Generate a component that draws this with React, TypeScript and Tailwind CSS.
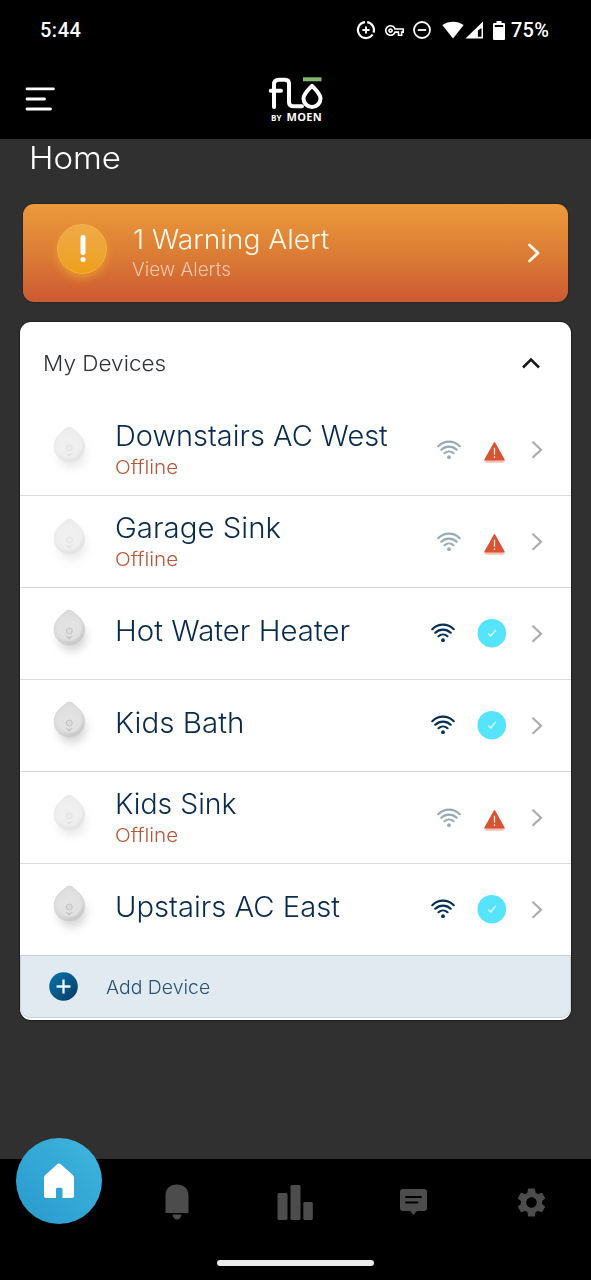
import React from "react";
import { MdOutlineVpnKey, MdSettings } from "react-icons/md";

type Device = { name: string; online: boolean; stretch: string };

const devices: Device[] = [
  { name: "Downstairs AC West", online: false, stretch: "scale-x-[1.034]" },
  { name: "Garage Sink", online: false, stretch: "scale-x-[1.05]" },
  { name: "Hot Water Heater", online: true, stretch: "scale-x-[1.05]" },
  { name: "Kids Bath", online: true, stretch: "scale-x-[1.055]" },
  { name: "Kids Sink", online: false, stretch: "scale-x-[1.015]" },
  { name: "Upstairs AC East", online: true, stretch: "scale-x-[1.042]" },
];

function StatusBar() {
  return (
    <div className="flex h-[60px] items-center pr-[41px] pl-[40px] text-white">
      <span className="font-[Roboto] text-[20px] leading-6 font-medium tracking-[0.5px]">5:44</span>
      <div className="ml-auto flex items-center">
        <svg className="h-5 w-5" viewBox="0 0 20 20" fill="none" stroke="currentColor">
          <path d="M9 2.1A8 8 0 1 0 16.6 14.5M11.2 2.1A8 8 0 0 1 17.5 12.6" strokeWidth="2.2" />
          <path d="M10 6.4v7.2M6.4 10h7.2" strokeWidth="1.9" />
        </svg>
        <MdOutlineVpnKey className="ml-[9px] h-[19px] w-[19px]" />
        <svg className="ml-2 h-5 w-5" viewBox="0 0 20 20" fill="none" stroke="currentColor" strokeWidth="1.8">
          <circle cx="10" cy="10" r="8" />
          <path d="M5.8 10h8.4" />
        </svg>
        <svg className="ml-[10px] h-[18px] w-[42px]" viewBox="0 0 42 18" fill="currentColor">
          <path d="M.3 4C6.500-.5 15.400-.5 21.700 4L11 17.500Z" />
          <path fillRule="evenodd" d="M41 .5v17H23.500ZM39.500 7v8.800h-3.600V9.500Z" />
        </svg>
        <svg className="ml-[9px] h-[19px] w-3" viewBox="0 0 12 19">
          <path fill="currentColor" fillRule="evenodd" d="M3.5 0h5v2H11q1 0 1 1v15q0 1-1 1H1q-1 0-1-1V3q0-1 1-1h2.500ZM1.800 4v2h8.400V4Z" />
        </svg>
        <span className="ml-[6px] w-[39px] font-[Roboto] text-[20px] leading-6 font-medium tracking-[0.2px]">75%</span>
      </div>
    </div>
  );
}

function Header() {
  return (
    <header className="grid h-[79px] grid-cols-[1fr_56px_1fr] items-center pl-[25px]">
      <svg className="-mt-[2px] h-6 w-[30px]" viewBox="0 0 30 24" stroke="white" strokeWidth="2.800" strokeLinecap="round">
        <path d="M2 1.800H28.500M2 12H19.500M2 22H25.500" />
      </svg>
      <div className="mt-[2px] -ml-[12px] flex w-[56px] flex-col items-center">
        <svg className="h-[32px] w-[56px]" viewBox="0 0 56 32" fill="none">
          <path d="M6 30V7.500Q6 2.700 11 2.700H17Q21 2.700 21 6.700V25Q21 29.300 26 29.300H34M2.700 13.800H13" stroke="white" strokeWidth="4" strokeLinecap="round" />
          <path d="M44 8.800C39.500 13.500 35.500 17 35.500 21.500A8.500 8.500 0 0 0 52.500 21.500C52.500 17 48.500 13.500 44 8.800Z" stroke="white" strokeWidth="4" strokeLinejoin="round" />
          <path d="M35 2.300H53.500" stroke="#83b86e" strokeWidth="4" />
        </svg>
        <div className="mt-[2px] ml-px flex w-[51px] items-baseline justify-between font-['Open_Sans'] leading-[12px] font-bold text-white">
          <span className="text-[8px]">BY</span>
          <span className="text-[11px] font-bold tracking-[0.3px]">MOEN</span>
        </div>
      </div>
    </header>
  );
}

function Warning() {
  return (
    <section className="ml-[23px] flex h-[98px] w-[545px] rounded-[11px] bg-linear-to-b from-[#eb9a3b] via-[#dc7d35] to-[#cc5932] shadow-[0_0_2px_#201a16]">
      <div className="mt-[20px] ml-[34px] flex h-[50px] w-[50px] items-center justify-center rounded-full border border-[#f4b348] bg-linear-to-b from-[#efaa48] to-[#eea016] shadow-[0_4px_9px_#efa02ccc]">
        <svg className="-mt-px ml-px h-7 w-2" viewBox="0 0 8 28" fill="white">
          <rect x="1.500" y="0" width="5" height="20" rx="2.500" />
          <circle cx="4" cy="24.500" r="2.500" />
        </svg>
      </div>
      <div className="ml-[25px] pt-[20px]">
        <div className="origin-left scale-x-[1.043] pl-px text-[27px] leading-[32px] text-[#fff8e8]">1 Warning Alert</div>
        <div className="mt-[2px] origin-left scale-x-[1.022] text-[18.500px] leading-[22px] text-[#f8c8ac]">View Alerts</div>
      </div>
      <svg className="mt-[39px] mr-[28px] ml-auto h-5 w-3" viewBox="0 0 12 20" fill="none" stroke="#fff8e8" strokeWidth="2.800" strokeLinecap="round" strokeLinejoin="round">
        <path d="m1.500 2 8.500 8-8.500 8" />
      </svg>
    </section>
  );
}

function Detector({ online }: { online: boolean }) {
  return (
    <svg className={online ? "h-[60px] w-[60px]" : "h-[60px] w-[60px] opacity-50"} viewBox="0 0 60 60">
      <defs>
        <linearGradient id="shell" x1="0" y1="0" x2="0.6" y2="1">
          <stop stopColor="#dcdcdc" />
          <stop offset="0.5" stopColor="#dedede" />
          <stop offset="1" stopColor="#c9c9c9" />
        </linearGradient>
        <radialGradient id="face">
          <stop stopColor="#e3e3e3" />
          <stop offset="0.8" stopColor="#e1e1e1" />
          <stop offset="1" stopColor="#e1e1e1" stopOpacity="0" />
        </radialGradient>
        <filter id="soft" x="-40%" y="-40%" width="180%" height="180%"><feGaussianBlur stdDeviation="4" /></filter>
      </defs>
      <circle cx="33" cy="38" r="14" fill="#bbb" opacity="0.6" filter="url(#soft)" />
      <path d="M24 15Q28 11 30.300 11T36.600 15C41.500 19 45.600 23.500 45.600 31A15.200 15.200 0 0 1 15.200 31C15.200 23.500 19 19 24 15Z" fill="url(#shell)" stroke="#cfcfcf" strokeWidth="0.800" />
      <ellipse cx="30.300" cy="29" rx="14" ry="14.500" fill="url(#face)" />
      <circle cx="30.300" cy="32" r="3" fill="#dcdcdc" stroke="#c0c0c0" strokeWidth="0.900" />
      <path d="M27.300 37.500q3 2.500 6 0M29.300 39.700h2" fill="none" stroke="#bbb" strokeWidth="1" />
    </svg>
  );
}

function Wifi({ online }: { online: boolean }) {
  return (
    <svg className={online ? "-mt-px h-5 w-6 text-[#062f55]" : "h-5 w-6 text-[#95abba]"} viewBox="0 0 24 20" fill="none" stroke="currentColor" strokeWidth="2.200" strokeLinecap="round">
      <path d="M1.300 6.200C7.400.2 16.600.2 22.700 6.200M4.300 9.700C8.800 5.500 15.200 5.500 19.700 9.700M7.500 13.200C10.100 10.900 13.900 10.900 16.500 13.200" />
      <circle cx="12" cy="17.200" r="1.900" fill="currentColor" stroke="none" />
    </svg>
  );
}

function DeviceRow({ device }: { device: Device }) {
  const { name, online, stretch } = device;
  return (
    <li className="flex h-[92px] items-center border-b border-[#d8dadc] pl-[19px]">
      <div className={online ? "mb-[10px]" : "mb-[8px]"}><Detector online={online} /></div>
      <div className="ml-[16px] w-[300px] whitespace-nowrap">
        <div className={`${online ? "mb-[6px]" : "-mt-px"} origin-left text-[28px] leading-[34px] text-[#092b4e] ${stretch}`}>{name}</div>
        {!online && <div className="mt-[3px] origin-left scale-x-[1.09] text-[19px] leading-[24px] text-[#bd5638]">Offline</div>}
      </div>
      <div className={online ? "ml-[16px] w-6" : "ml-[22px] w-6"}><Wifi online={online} /></div>
      {online ? (
        <svg className="-mt-px ml-[22px] h-[30px] w-[30px]" viewBox="0 0 30 30">
          <circle cx="14.800" cy="15.200" r="14.300" fill="#56e4fa" />
          <path d="m11.300 15.500 2.500 2.500 5-6" fill="none" stroke="#d7fbff" strokeWidth="1.300" />
        </svg>
      ) : (
        <svg className="mt-[5px] ml-[21px] h-[26px] w-[25px]" viewBox="0 0 25 26">
          <defs><filter id="glow" x="-20%" y="-150%" width="140%" height="400%"><feGaussianBlur stdDeviation="1.200" /></filter></defs>
          <path d="M4 22h17v.5H4Z" fill="#f6a28c" stroke="#f6a28c" strokeWidth="2" filter="url(#glow)" />
          <path d="M12.500 3.800 22 20.800H3Z" fill="#d65433" stroke="#d65433" strokeWidth="1.500" strokeLinejoin="round" />
          <path d="M12.500 8.800v7M12.500 17.300v1.800" stroke="#ffe2d5" strokeWidth="1.300" />
        </svg>
      )}
      <svg className="ml-[24px] h-5 w-3" viewBox="0 0 12 20" fill="none" stroke="#acacac" strokeWidth="2.200">
        <path d="m1.500 1.700 8.500 8-8.500 8" />
      </svg>
    </li>
  );
}

function DevicesCard() {
  return (
    <section className="mt-[20px] ml-5 h-[698px] w-[551px] overflow-hidden rounded-[11px] bg-white shadow-[0_0_2px_black]">
      <div className="flex h-[82px] items-center pr-[31px] pl-[23px]">
        <h2 className="origin-left scale-x-[1.025] text-[22px] leading-7 text-[#303438]">My Devices</h2>
        <svg className="-mt-px ml-auto h-3 w-[18px]" viewBox="0 0 18 12" fill="none" stroke="#171717" strokeWidth="2.500">
          <path d="m1 10.500 8-8 8 8" />
        </svg>
      </div>
      <ul>{devices.map((device) => <DeviceRow key={device.name} device={device} />)}</ul>
      <div className="-mt-px flex h-[63px] items-center rounded-b-[10px] border border-[#c6d1d6] bg-[#e1eaf1] pl-[28px]">
        <svg className="h-[29px] w-[29px]" viewBox="0 0 29 29">
          <defs><linearGradient id="add" x2="1" y2="1"><stop stopColor="#0873ae" /><stop offset="1" stopColor="#063b62" /></linearGradient></defs>
          <circle cx="14.500" cy="14.500" r="14.300" fill="url(#add)" />
          <path d="M14.500 7.500v14M7.500 14.500h14" stroke="#e8f7ff" strokeWidth="2.300" />
        </svg>
        <span className="ml-[28px] origin-left scale-x-[1.05] text-[18.500px] leading-6 text-[#2b5270]">Add Device</span>
      </div>
    </section>
  );
}

function BottomNav() {
  return (
    <nav className="flex h-[121px] flex-col bg-black text-[#4c4c4c]">
      <div className="grid h-[86px] grid-cols-5 items-center justify-items-center">
        <div className="-mt-[42px] flex h-[86px] w-[86px] items-center justify-center rounded-full bg-linear-to-bl from-[#3eb5dd] to-[#289ace]">
          <svg className="-mt-px h-[35px] w-[30px]" viewBox="0 0 30 36" preserveAspectRatio="none" fill="white">
            <path d="M13.500 1Q15 0 16.500 1L28.500 12Q30 13.500 30 15V34Q30 36 28 36H18.500V27Q18.500 25.500 17 25.500H13.500Q12 25.500 12 27V36H2Q0 36 0 34V15Q0 13.500 1.500 12Z" />
          </svg>
        </div>
        <svg className="h-9 w-6" viewBox="0 0 24 36" fill="currentColor">
          <path d="M.5 29V12C.5 4.500 5 .5 12 .5S23.500 4.500 23.500 12v17ZM7.500 30.500h9q-1 5-4.500 5t-4.500-5Z" />
        </svg>
        <svg className="h-[35px] w-[36px]" viewBox="0 0 36 35" fill="currentColor">
          <rect x=".5" y="8" width="10" height="27" rx="1.500" />
          <rect x="13.500" width="10" height="35" rx="1.500" />
          <rect x="26.300" y="17" width="9.500" height="18" rx="1.500" />
        </svg>
        <svg className="h-[26px] w-[27px]" viewBox="0 0 27 26">
          <path fill="currentColor" d="M3 0h21q3 0 3 3v16q0 3-3 3h-7l-3.500 4-3.500-4H3q-3 0-3-3V3q0-3 3-3Z" />
          <path stroke="black" strokeWidth="1.900" strokeLinecap="round" d="M6 8h15M6 13.500h11.500" />
        </svg>
        <MdSettings className="h-[35px] w-[35px]" />
      </div>
      <div className="mt-[15px] ml-[217px] h-[6px] w-[157px] rounded-full bg-[#ececec]" />
    </nav>
  );
}

export default function App() {
  return (
    <main className="flex h-[1280px] w-[591px] flex-col overflow-hidden bg-[#303030] font-['Inter',sans-serif] font-light">
      <div className="h-[139px] bg-black">
        <StatusBar />
        <Header />
      </div>
      <h1 className="h-[65px] pl-[29px] text-[31px] leading-[37px] font-light text-white">
        <span className="inline-block origin-left scale-x-[1.065]">Home</span>
      </h1>
      <Warning />
      <DevicesCard />
      <div className="grow" />
      <BottomNav />
    </main>
  );
}
